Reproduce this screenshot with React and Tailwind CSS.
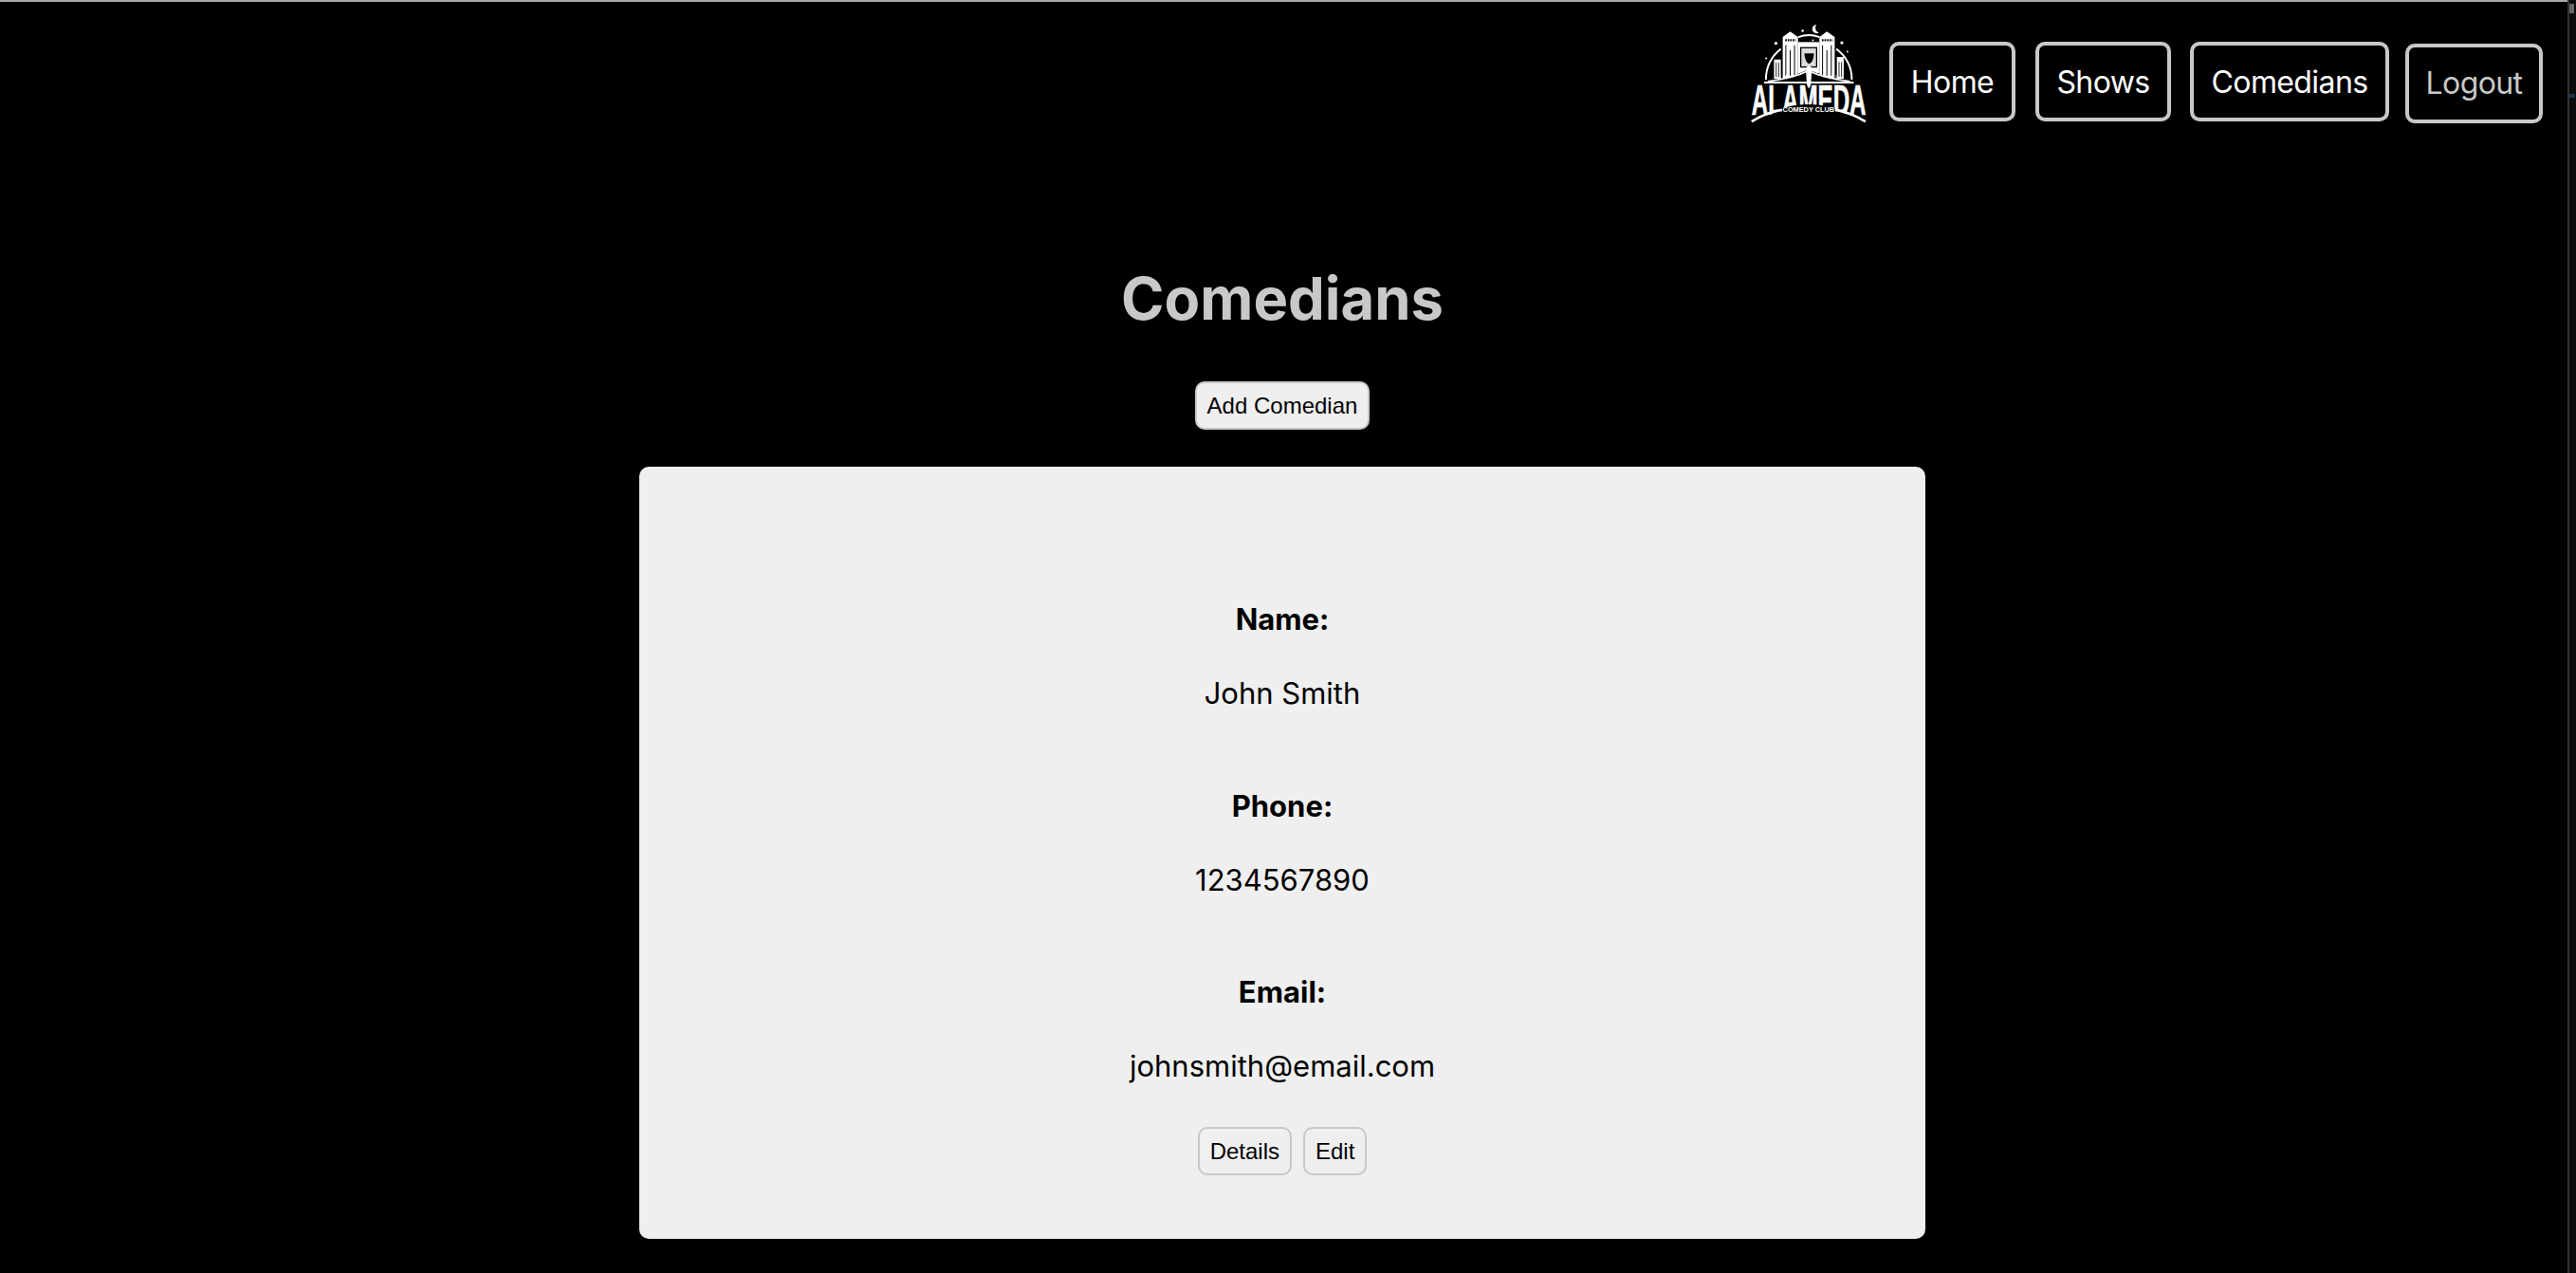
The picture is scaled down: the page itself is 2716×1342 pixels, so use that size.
const NAV_LINKS = [
  { label: 'Home', className: 'w-[133px] pt-[2px] text-white' },
  { label: 'Shows', className: 'w-[143px] pt-[2px] text-white ml-[21px]' },
  { label: 'Comedians', className: 'w-[210px] pt-[2px] text-white ml-[20px]' },
  { label: 'Logout', className: 'w-[145px] text-[#c8c8c8] ml-[17px] mt-[2px]' },
]

const FIELDS = [
  { label: 'Name:', value: 'John Smith', className: 'mt-[141px]' },
  { label: 'Phone:', value: '1234567890', className: 'mt-[79px]' },
  { label: 'Email:', value: 'johnsmith@email.com', className: 'mt-[78px]' },
]

function Logo() {
  return (
    <svg viewBox="40 25 380 320" className="w-[125px] h-[105px] shrink-0" fill="none">
      {/* moon and stars */}
      <path d="M256 28 a14 14 0 1 0 8 26 a17 17 0 0 1 -8 -26z" fill="#fff" />
      <circle cx="212" cy="48" r="4" fill="#fff" />
      <circle cx="126" cy="88" r="5" fill="#fff" />
      <circle cx="338" cy="86" r="5" fill="#fff" />
      <circle cx="95" cy="136" r="3" fill="#fff" />
      <circle cx="356" cy="115" r="3" fill="#fff" />
      <circle cx="245" cy="78" r="3" fill="#fff" />
      {/* outer arc */}
      <path d="M94 205 C94 165 112 130 142 106" stroke="#fff" strokeWidth="6" />
      <path d="M370 205 C370 165 352 130 320 106" stroke="#fff" strokeWidth="6" />
      <path d="M198 68 C220 60 245 60 266 68" stroke="#fff" strokeWidth="6" />
      {/* towers */}
      <path d="M172 50 L197 68 V200 H148 V68z" fill="#fff" />
      <path d="M290 50 L315 68 V200 H266 V68z" fill="#fff" />
      <path d="M156 78 H190 M274 78 H308" stroke="#000" strokeWidth="7" strokeDasharray="5 3" />
      <path d="M158 94 V192 M172 110 V192 M186 94 V192 M276 94 V192 M290 110 V192 M304 94 V192" stroke="#000" strokeWidth="3" />
      {/* center building */}
      <rect x="197" y="84" width="69" height="100" fill="#fff" />
      <rect x="204" y="100" width="55" height="66" fill="#000" />
      <rect x="208" y="104" width="47" height="58" fill="#dcdcdc" />
      <path d="M218 120 H248 C248 140 242 150 232 154 C224 150 218 136 218 120z" fill="#000" />
      {/* side wings */}
      <rect x="120" y="140" width="22" height="62" fill="#fff" />
      <rect x="322" y="132" width="22" height="70" fill="#fff" />
      <path d="M127 150 V196 M135 150 V196 M329 148 V196 M337 148 V196" stroke="#000" strokeWidth="2.5" />
      {/* bridge */}
      <path d="M92 212 C150 205 200 190 230 170 C262 190 312 205 372 212 V222 H92z" fill="#000" />
      <path d="M100 210 C150 204 200 192 230 176 C262 192 312 204 364 210" stroke="#fff" strokeWidth="5" />
      <path d="M88 214 H376" stroke="#fff" strokeWidth="6" />
      <path d="M140 206 V190 M160 204 V188 M180 198 V184 M280 198 V184 M300 204 V188 M320 206 V190" stroke="#fff" strokeWidth="2" />
      <path d="M222 172 C222 158 242 158 242 172 L238 222 L232 234 L226 222z" fill="#fff" />
      {/* wordmark, the black shape under it curves the base of the letters */}
      <text
        transform="translate(48 318) scale(1 1.33)"
        textLength="368"
        lengthAdjust="spacingAndGlyphs"
        fill="#fff"
        stroke="#fff"
        strokeWidth="1.5"
        className="font-['Liberation_Sans',sans-serif] font-bold text-[100px]"
      >
        ALAMEDA
      </text>
      <path d="M100 326 C130 296 180 284 230 284 C280 284 330 296 362 326z" fill="#000" />
      <text
        x="231"
        y="308"
        textAnchor="middle"
        textLength="166"
        lengthAdjust="spacingAndGlyphs"
        fill="#fff"
        className="font-['Liberation_Sans',sans-serif] font-bold text-[20px]"
      >
        COMEDY CLUB
      </text>
      <path d="M46 336 C80 316 110 304 146 298 L146 306 C112 312 84 322 50 343z" fill="#fff" />
      <path d="M416 336 C382 316 352 304 316 298 L316 306 C350 312 378 322 412 343z" fill="#fff" />
    </svg>
  )
}

function NavButton({ label, className }) {
  return (
    <a className={`flex h-[84px] items-center justify-center rounded-[10px] border-4 border-[#c8c8c8] text-[32px] font-normal tracking-[-0.6px] ${className}`}>
      {label}
    </a>
  )
}

function SmallButton({ children, className = '' }) {
  return (
    <button className={`h-[51px] rounded-[10px] border-2 border-[#c8c8c8] bg-[#efefef] px-[11px] text-[24px] leading-none text-black font-['Liberation_Sans',sans-serif] ${className}`}>
      {children}
    </button>
  )
}

export default function App() {
  return (
    <div className="flex h-[1342px] overflow-hidden bg-black font-['Inter',sans-serif]">
      <div className="flex-1 min-w-0">
        <div className="h-[2px] bg-[#aaaaaa]" />
        <header className="flex items-start justify-end pt-[23px] pr-[26px]">
          <Logo />
          <nav className="flex items-start ml-[23px] mt-[19px]">
            {NAV_LINKS.map((link) => (
              <NavButton key={link.label} {...link} />
            ))}
          </nav>
        </header>

        <main className="flex flex-col items-center pr-[3px]">
          <h1 className="mt-[149px] text-[61.5px] leading-[72px] font-bold text-[#c8c8c8]">Comedians</h1>
          <SmallButton className="mt-[51px]">Add Comedian</SmallButton>

          <section className="mt-[39px] flex h-[814px] w-[1356px] flex-col items-center rounded-[10px] bg-[#efefef] text-black">
            {FIELDS.map((field) => (
              <div key={field.label} className={`text-center ${field.className}`}>
                <div className="text-[31px] leading-[40px] font-bold">{field.label}</div>
                <div className="mt-[38px] text-[31px] leading-[40px]">{field.value}</div>
              </div>
            ))}
            <div className="mt-[44px] flex gap-[12px]">
              <SmallButton>Details</SmallButton>
              <SmallButton>Edit</SmallButton>
            </div>
          </section>
        </main>
      </div>

      {/* edge of the window behind */}
      <aside className="flex w-[9px] shrink-0 flex-col border-l-2 border-[#333] bg-[#0c0c0c] pt-1">
        <div className="h-[10px] w-[5px] bg-[#666]" />
        <div className="mt-[85px] h-[4px] w-[6px] bg-[#1f3350]" />
      </aside>
    </div>
  )
}
